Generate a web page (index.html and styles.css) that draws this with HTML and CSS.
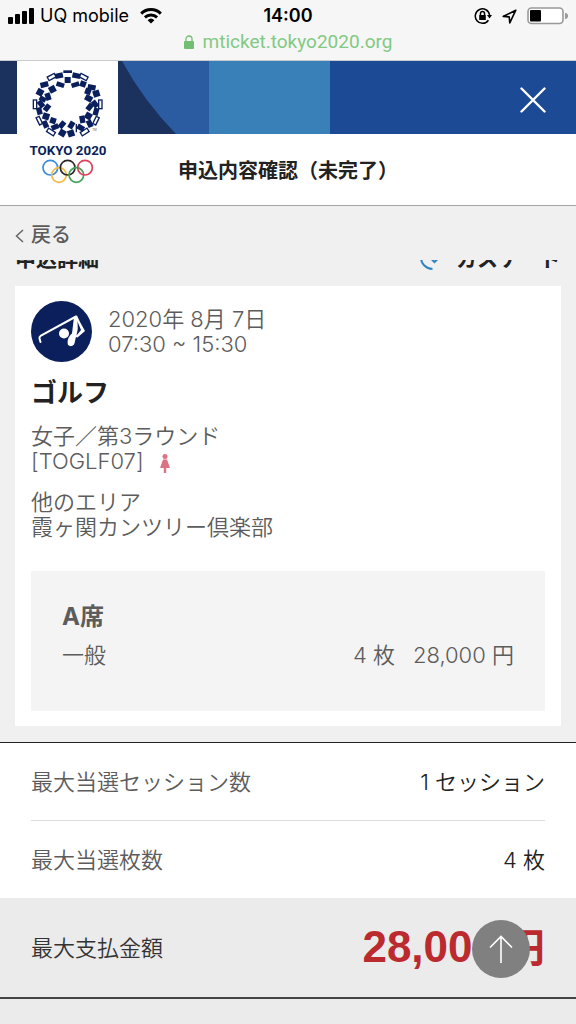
FILE: index.html
```html
<!DOCTYPE html>
<html lang="ja">
<head>
    <meta charset="UTF-8">
    <meta name="viewport" content="width=device-width, initial-scale=1.0">
    <title>申込内容確認（未完了）</title>
    <link rel="stylesheet" href="styles.css">
</head>
<body>
    <div class="page-top">
        <!-- Phone status bar -->
        <div class="phone-bar">
            <div class="status">
                <div class="status-left">
                    <svg class="signal" width="26" height="16" viewBox="0 0 26 16">
                        <rect x="0" y="9" width="5" height="7" rx="1"/>
                        <rect x="7" y="6" width="5" height="10" rx="1"/>
                        <rect x="14" y="3" width="5" height="13" rx="1"/>
                        <rect x="21" y="0" width="5" height="16" rx="1"/>
                    </svg>
                    <span class="carrier">UQ mobile</span>
                    <svg class="wifi" width="22" height="16" viewBox="0 0 22 16" fill="none" stroke="#000" stroke-width="3">
                        <path d="M1.2 5.6A14 14 0 0 1 20.8 5.6"/>
                        <path d="M4.9 9.3A9 9 0 0 1 17.1 9.3"/>
                        <path d="M7.6 12.2A5 5 0 0 1 14.4 12.2L11 15.6z" fill="#000" stroke="none"/>
                    </svg>
                </div>
                <span class="clock">14:00</span>
                <div class="status-right">
                    <svg width="18" height="18" viewBox="0 0 18 18" fill="none" stroke="#000" stroke-width="1.5">
                        <path d="M14.4 13.2A7.2 7.2 0 1 1 15.6 8"/>
                        <path d="M13 8h5l-2.5 3.4z" fill="#000" stroke="none"/>
                        <rect x="5.2" y="8" width="6.6" height="5" fill="#000" stroke="none"/>
                        <path d="M6.5 8V6.4a2 2 0 0 1 4 0V8"/>
                    </svg>
                    <svg width="15" height="15" viewBox="0 0 15 15" fill="none" stroke="#000" stroke-width="1.6" stroke-linejoin="round">
                        <path d="M13.8 1.2 1.2 7.4l6 .5.6 6z"/>
                    </svg>
                    <svg width="41" height="18" viewBox="0 0 41 18">
                        <rect x="1" y="1" width="35" height="15.5" rx="3.5" fill="#fff" stroke="#999" stroke-width="1.6"/>
                        <rect x="3" y="3" width="11" height="11.5" rx="1"/>
                        <path d="M38 6v6a3 3 0 0 0 0-6z" fill="#999"/>
                    </svg>
                </div>
            </div>
            <div class="address">
                <svg width="10" height="14" viewBox="0 0 10 14">
                    <rect x="0" y="6" width="10" height="8" rx="1" fill="#72bf73"/>
                    <path d="M2 6.5V4a3 3 0 0 1 6 0v2.5" fill="none" stroke="#72bf73" stroke-width="1.3"/>
                </svg>
                <span>mticket.tokyo2020.org</span>
            </div>
        </div>

        <header class="site-header">
            <div class="banner">
                <svg class="banner-art" width="330" height="73" viewBox="0 0 330 73">
                    <rect width="209" height="73" fill="#1b325f"/>
                    <path d="M122 0Q143 39 176 73H209V0z" fill="#2b5ba1"/>
                    <rect x="209" width="121" height="73" fill="#3a80b8"/>
                </svg>
                <button type="button" class="close" aria-label="閉じる">
                    <svg width="26" height="26" viewBox="0 0 26 26" stroke="#fff" stroke-width="2.4" stroke-linecap="round">
                        <path d="M1.5 1.5 24.5 24.5M24.5 1.5 1.5 24.5"/>
                    </svg>
                </button>
            </div>
            <a class="logo" href="#" aria-label="TOKYO 2020">
                <svg width="101" height="125" viewBox="51 18 303 375">
                    <g fill="#0a1f5c">
                        <rect x="190" y="46" width="26" height="8"/>
                        <rect x="194" y="66" width="18" height="18"/>
                        <rect x="-12" y="-8" width="24" height="16" transform="translate(177 62) rotate(-12)"/>
                        <rect x="-12" y="-8" width="24" height="16" transform="translate(229 62) rotate(12)"/>
                        <rect x="-12" y="-7" width="24" height="14" transform="translate(181 89) rotate(18)"/>
                        <rect x="-12" y="-7" width="24" height="14" transform="translate(226 89) rotate(-18)"/>
                        <rect x="-12" y="-8" width="24" height="16" transform="translate(133 89) rotate(-14)"/>
                        <rect x="-12" y="-8" width="24" height="16" transform="translate(275 97) rotate(12)"/>
                        <rect x="-10" y="-10" width="20" height="20" transform="translate(157 103) rotate(-28)"/>
                        <rect x="-9" y="-9" width="18" height="18" transform="translate(249 87) rotate(20)"/>
                        <rect x="-10" y="-10" width="20" height="20" transform="translate(120 112) rotate(28)"/>
                        <rect x="-10" y="-10" width="20" height="20" transform="translate(289 116) rotate(-18)"/>
                        <rect x="-8" y="-11" width="16" height="22" transform="translate(144 125) rotate(-18)"/>
                        <rect x="-11" y="-9" width="22" height="18" transform="translate(266 130) rotate(28)"/>
                        <rect x="-10" y="-7" width="20" height="14" transform="translate(128 132) rotate(28)"/>
                        <rect x="-9" y="-9" width="18" height="18" transform="translate(264 109) rotate(20)"/>
                        <rect x="-8" y="-11" width="16" height="22" transform="translate(141 158) rotate(38)"/>
                        <rect x="-8" y="-11" width="16" height="22" transform="translate(123 147) rotate(-38)"/>
                        <rect x="-8" y="-11" width="16" height="22" transform="translate(269 156) rotate(38)"/>
                        <rect x="-8" y="-11" width="16" height="22" transform="translate(285 147) rotate(-38)"/>
                        <rect x="-8" y="-11" width="16" height="22" transform="translate(118 168) rotate(-15)"/>
                        <rect x="-8" y="-11" width="16" height="22" transform="translate(288 170) rotate(15)"/>
                        <rect x="-10" y="-10" width="20" height="20" transform="translate(138 184) rotate(18)"/>
                        <rect x="-10" y="-10" width="20" height="20" transform="translate(265 183) rotate(30)"/>
                        <rect x="-8" y="-11" width="16" height="22" transform="translate(247 193) rotate(-10)"/>
                        <rect x="-8" y="-11" width="16" height="22" transform="translate(136 208) rotate(-24)"/>
                        <rect x="-8" y="-11" width="16" height="22" transform="translate(269 206) rotate(-24)"/>
                        <rect x="-9" y="-9" width="18" height="18" transform="translate(159 197) rotate(18)"/>
                        <rect x="-11" y="-8" width="22" height="16" transform="translate(165 216) rotate(-22)"/>
                        <rect x="-8" y="-11" width="16" height="22" transform="translate(186 209) rotate(40)"/>
                        <rect x="-8" y="-11" width="16" height="22" transform="translate(214 210) rotate(30)"/>
                        <rect x="-11" y="-8" width="22" height="16" transform="translate(242 218) rotate(30)"/>
                        <rect x="-10" y="-10" width="20" height="20" transform="translate(187 234) rotate(30)"/>
                        <rect x="-10" y="-10" width="20" height="20" transform="translate(213 235) rotate(-18)"/>
                    </g>
                    <g fill="none" stroke="#0a1f5c" stroke-width="4">
                        <rect x="-12" y="-6" width="24" height="12" transform="translate(155 66) rotate(-28)"/>
                        <rect x="-12" y="-6" width="24" height="12" transform="translate(251 66) rotate(28)"/>
                        <rect x="-5" y="-13" width="10" height="26" transform="translate(105 148)"/>
                        <rect x="-5" y="-13" width="10" height="26" transform="translate(301 148)"/>
                        <rect x="-5" y="-12" width="10" height="24" transform="translate(118 197) rotate(-26)"/>
                        <rect x="-5" y="-12" width="10" height="24" transform="translate(288 197) rotate(26)"/>
                        <rect x="-12" y="-6" width="24" height="12" transform="translate(153 231) rotate(32)"/>
                        <rect x="-12" y="-6" width="24" height="12" transform="translate(254 231) rotate(-32)"/>
                        <path d="M229 207V232"/>
                    </g>
                    <text class="logo-tm" x="277" y="229">TM</text>
                    <text class="logo-text" x="204" y="299" text-anchor="middle">TOKYO 2020</text>
                    <g fill="none" stroke-width="5">
                        <circle cx="151" cy="338" r="22" stroke="#3c8bd6"/>
                        <circle cx="177" cy="360" r="22" stroke="#f1bd48"/>
                        <circle cx="203" cy="338" r="22" stroke="#2b2526"/>
                        <circle cx="229" cy="360" r="22" stroke="#40a35a"/>
                        <circle cx="255" cy="338" r="22" stroke="#dd4058"/>
                    </g>
                </svg>
            </a>
            <h1 class="page-title">申込内容確認（未完了）</h1>
        </header>

        <nav class="back-bar">
            <a class="back" href="#">
                <svg width="9" height="14" viewBox="0 0 9 14" fill="none" stroke="#666" stroke-width="1.5">
                    <path d="M8 1 1.5 7 8 13"/>
                </svg>
                <span>戻る</span>
            </a>
        </nav>
    </div>

    <main>
        <section class="details">
            <div class="details-head">
                <h2>申込詳細</h2>
                <span class="cascade">
                    <svg width="22" height="22" viewBox="0 0 22 22" fill="none" stroke="#2d86c3" stroke-width="2">
                        <path d="M12.5 21C6 20.5 1 16 1 9.5A10 10 0 0 1 12 1"/>
                        <path d="M10 9.5 14.5 14 19 9.5"/>
                    </svg>
                    <span>カスケード</span>
                </span>
            </div>

            <article class="card">
                <div class="session">
                    <svg width="61" height="61" viewBox="0 0 61 61">
                        <circle cx="30.5" cy="30.5" r="30.5" fill="#0a1f5c"/>
                        <path d="M45 15.5 10 34.5Q8 36 8.5 37.5L9.5 41" fill="none" stroke="#fff" stroke-width="2" stroke-linecap="round"/>
                        <circle cx="33" cy="32.5" r="5" fill="#fff"/>
                        <path d="M43 16 46 14.5 49 21 54 30 46.5 36.5 45 36C44 39 44 42 43 43.5Q40 46.5 37 44C36 40 37 36 41 32.5Z" fill="#fff"/>
                        <path d="M46.5 20.5 50 29 45.5 34.5Q47.5 28 46.5 20.5z" fill="#0a1f5c"/>
                    </svg>
                    <div class="session-time">
                        <div>2020年 8月 7日</div>
                        <div>07:30 ~ 15:30</div>
                    </div>
                </div>
                <h3>ゴルフ</h3>
                <p class="event">
                    女子／第3ラウンド<br>
                    [TOGLF07]
                    <svg class="female" width="10" height="19" viewBox="0 0 10 19" fill="#dc7384">
                        <circle cx="5" cy="2.5" r="2.5"/>
                        <path d="M3 5.5H7L10 14H6.2V19H3.8V14H0z"/>
                    </svg>
                </p>
                <p class="venue">他のエリア<br>霞ヶ関カンツリー倶楽部</p>
                <div class="seat">
                    <h4>A席</h4>
                    <div class="seat-line">
                        <span>一般</span>
                        <span class="seat-count">4 枚</span>
                        <span>28,000 円</span>
                    </div>
                </div>
            </article>
        </section>

        <dl class="summary">
            <div class="summary-row">
                <dt>最大当選セッション数</dt>
                <dd>1 セッション</dd>
            </div>
            <div class="summary-row">
                <dt>最大当選枚数</dt>
                <dd>4 枚</dd>
            </div>
            <div class="summary-row total">
                <dt>最大支払金額</dt>
                <dd><span class="amount">28,000</span>円</dd>
            </div>
        </dl>
    </main>

    <button type="button" class="to-top" aria-label="ページトップへ">
        <svg width="24" height="28" viewBox="0 0 24 28" fill="none" stroke="#fff" stroke-width="1.6">
            <path d="M12 28V1.5M1 12.5 12 1.5 23 12.5"/>
        </svg>
    </button>
</body>
</html>
```
FILE: styles.css
```css
:root {
    --navy: #0a1f5c;
    --text: #222;
    --text-muted: #5c5c5c;
    --grey-bg: #f0f0f0;
    --side: 31px;
}

* {
    margin: 0;
    padding: 0;
    box-sizing: border-box;
}

body {
    font-family: Inter, "Noto Sans CJK JP", sans-serif;
    font-size: 22px;
    font-weight: 350;
    line-height: 25px;
    color: var(--text-muted);
    background: #ebebeb;
    min-height: 100vh;
}

svg {
    display: block;
    flex: none;
}

button {
    border: none;
    cursor: pointer;
}

a {
    color: inherit;
    text-decoration: none;
}

/* Phone bar */
.page-top {
    position: sticky;
    top: 0;
    z-index: 2;
}

.phone-bar {
    height: 61px;
    padding: 4px 8px 0;
    background: #f6f6f6;
    border-bottom: 1px solid #c8cccf;
    font-size: 18px;
    line-height: 24px;
}

.status {
    display: grid;
    grid-template-columns: 1fr auto 1fr;
    align-items: center;
    color: #000;
}

.status-left,
.status-right {
    display: flex;
    align-items: center;
}

.status-left {
    gap: 6px;
    font-weight: 400;
}

.wifi {
    margin-left: 5px;
}

.clock {
    font-weight: 600;
}

.status-right {
    justify-content: flex-end;
    gap: 10px;
}

.address {
    display: flex;
    justify-content: center;
    align-items: center;
    gap: 9px;
    color: #82c983;
    font-family: Roboto, sans-serif;
    font-size: 19px;
    font-weight: 400;
    line-height: 28px;
}

/* Site header */
.site-header {
    position: relative;
    background: #fff;
    border-bottom: 1px solid #a5a5a5;
}

.banner {
    display: flex;
    justify-content: space-between;
    align-items: center;
    background: #1c4a95;
}

.close {
    padding: 10px;
    margin: 4px 20px 0 0;
    background: none;
}

.logo {
    position: absolute;
    top: 0;
    left: 17px;
    background: #fff;
}

.logo-text {
    font: 700 40px Roboto, sans-serif;
    fill: var(--navy);
}

.logo-tm {
    font: 400 9px Roboto, sans-serif;
    fill: #666;
}

.page-title {
    padding: 20px 0 16px;
    font-size: 20px;
    font-weight: 700;
    line-height: 35px;
    text-align: center;
    color: var(--text);
}

.back-bar {
    padding: 17px 15px 12px;
    background: var(--grey-bg);
}

.back {
    display: flex;
    align-items: center;
    gap: 7px;
    font-size: 20px;
    font-weight: 500;
}

/* Details */
.details {
    padding: 0 15px 16px;
    background: var(--grey-bg);
}

.details-head {
    display: flex;
    justify-content: space-between;
    align-items: center;
    margin-top: -14px;
    padding-bottom: 15px;
    font-size: 21px;
    font-weight: 700;
    color: var(--text);
}

.details-head h2 {
    font-size: 21px;
}

.cascade {
    display: flex;
    align-items: center;
    gap: 14px;
}

.card {
    padding: 15px 16px;
    background: #fff;
}

.session {
    display: flex;
    align-items: center;
    gap: 16px;
}

.card h3 {
    margin-top: 14px;
    font-size: 26px;
    line-height: 34px;
    color: var(--text);
}

.event {
    margin-top: 14px;
}

.female {
    display: inline-block;
    margin-left: 10px;
    vertical-align: -4px;
}

.venue {
    margin-top: 16px;
}

.seat {
    margin-top: 31px;
    padding: 29px 31px 39px;
    background: #f4f4f4;
    line-height: 34px;
}

.seat h4 {
    margin-bottom: 4px;
    font-size: 24px;
}

.seat-line {
    display: flex;
    gap: 18px;
}

.seat-count {
    margin-left: auto;
}

/* Summary */
.summary {
    padding: 0 var(--side);
    background: #fff;
    border-top: 1px solid #222;
    line-height: 34px;
}

.summary-row {
    display: flex;
    justify-content: space-between;
    align-items: center;
    padding: 22px 0 21px;
}

.summary-row:first-child {
    border-bottom: 1px solid #ddd;
}

.summary dd {
    color: var(--text);
}

.summary .total {
    margin: 0 calc(var(--side) * -1);
    padding: 24px var(--side);
    background: #ebebeb;
    border-bottom: 2px solid #444;
    color: #333;
}

.summary .total dd {
    font-size: 40px;
    font-weight: 600;
    line-height: 50px;
    color: #bb2a2e;
}

.amount {
    margin-right: 8px;
    font-family: "Liberation Sans", sans-serif;
    font-size: 44px;
}

.to-top {
    position: fixed;
    right: 46px;
    bottom: 46px;
    display: flex;
    justify-content: center;
    align-items: center;
    width: 58px;
    height: 58px;
    border-radius: 50%;
    background: #808080;
}
```
